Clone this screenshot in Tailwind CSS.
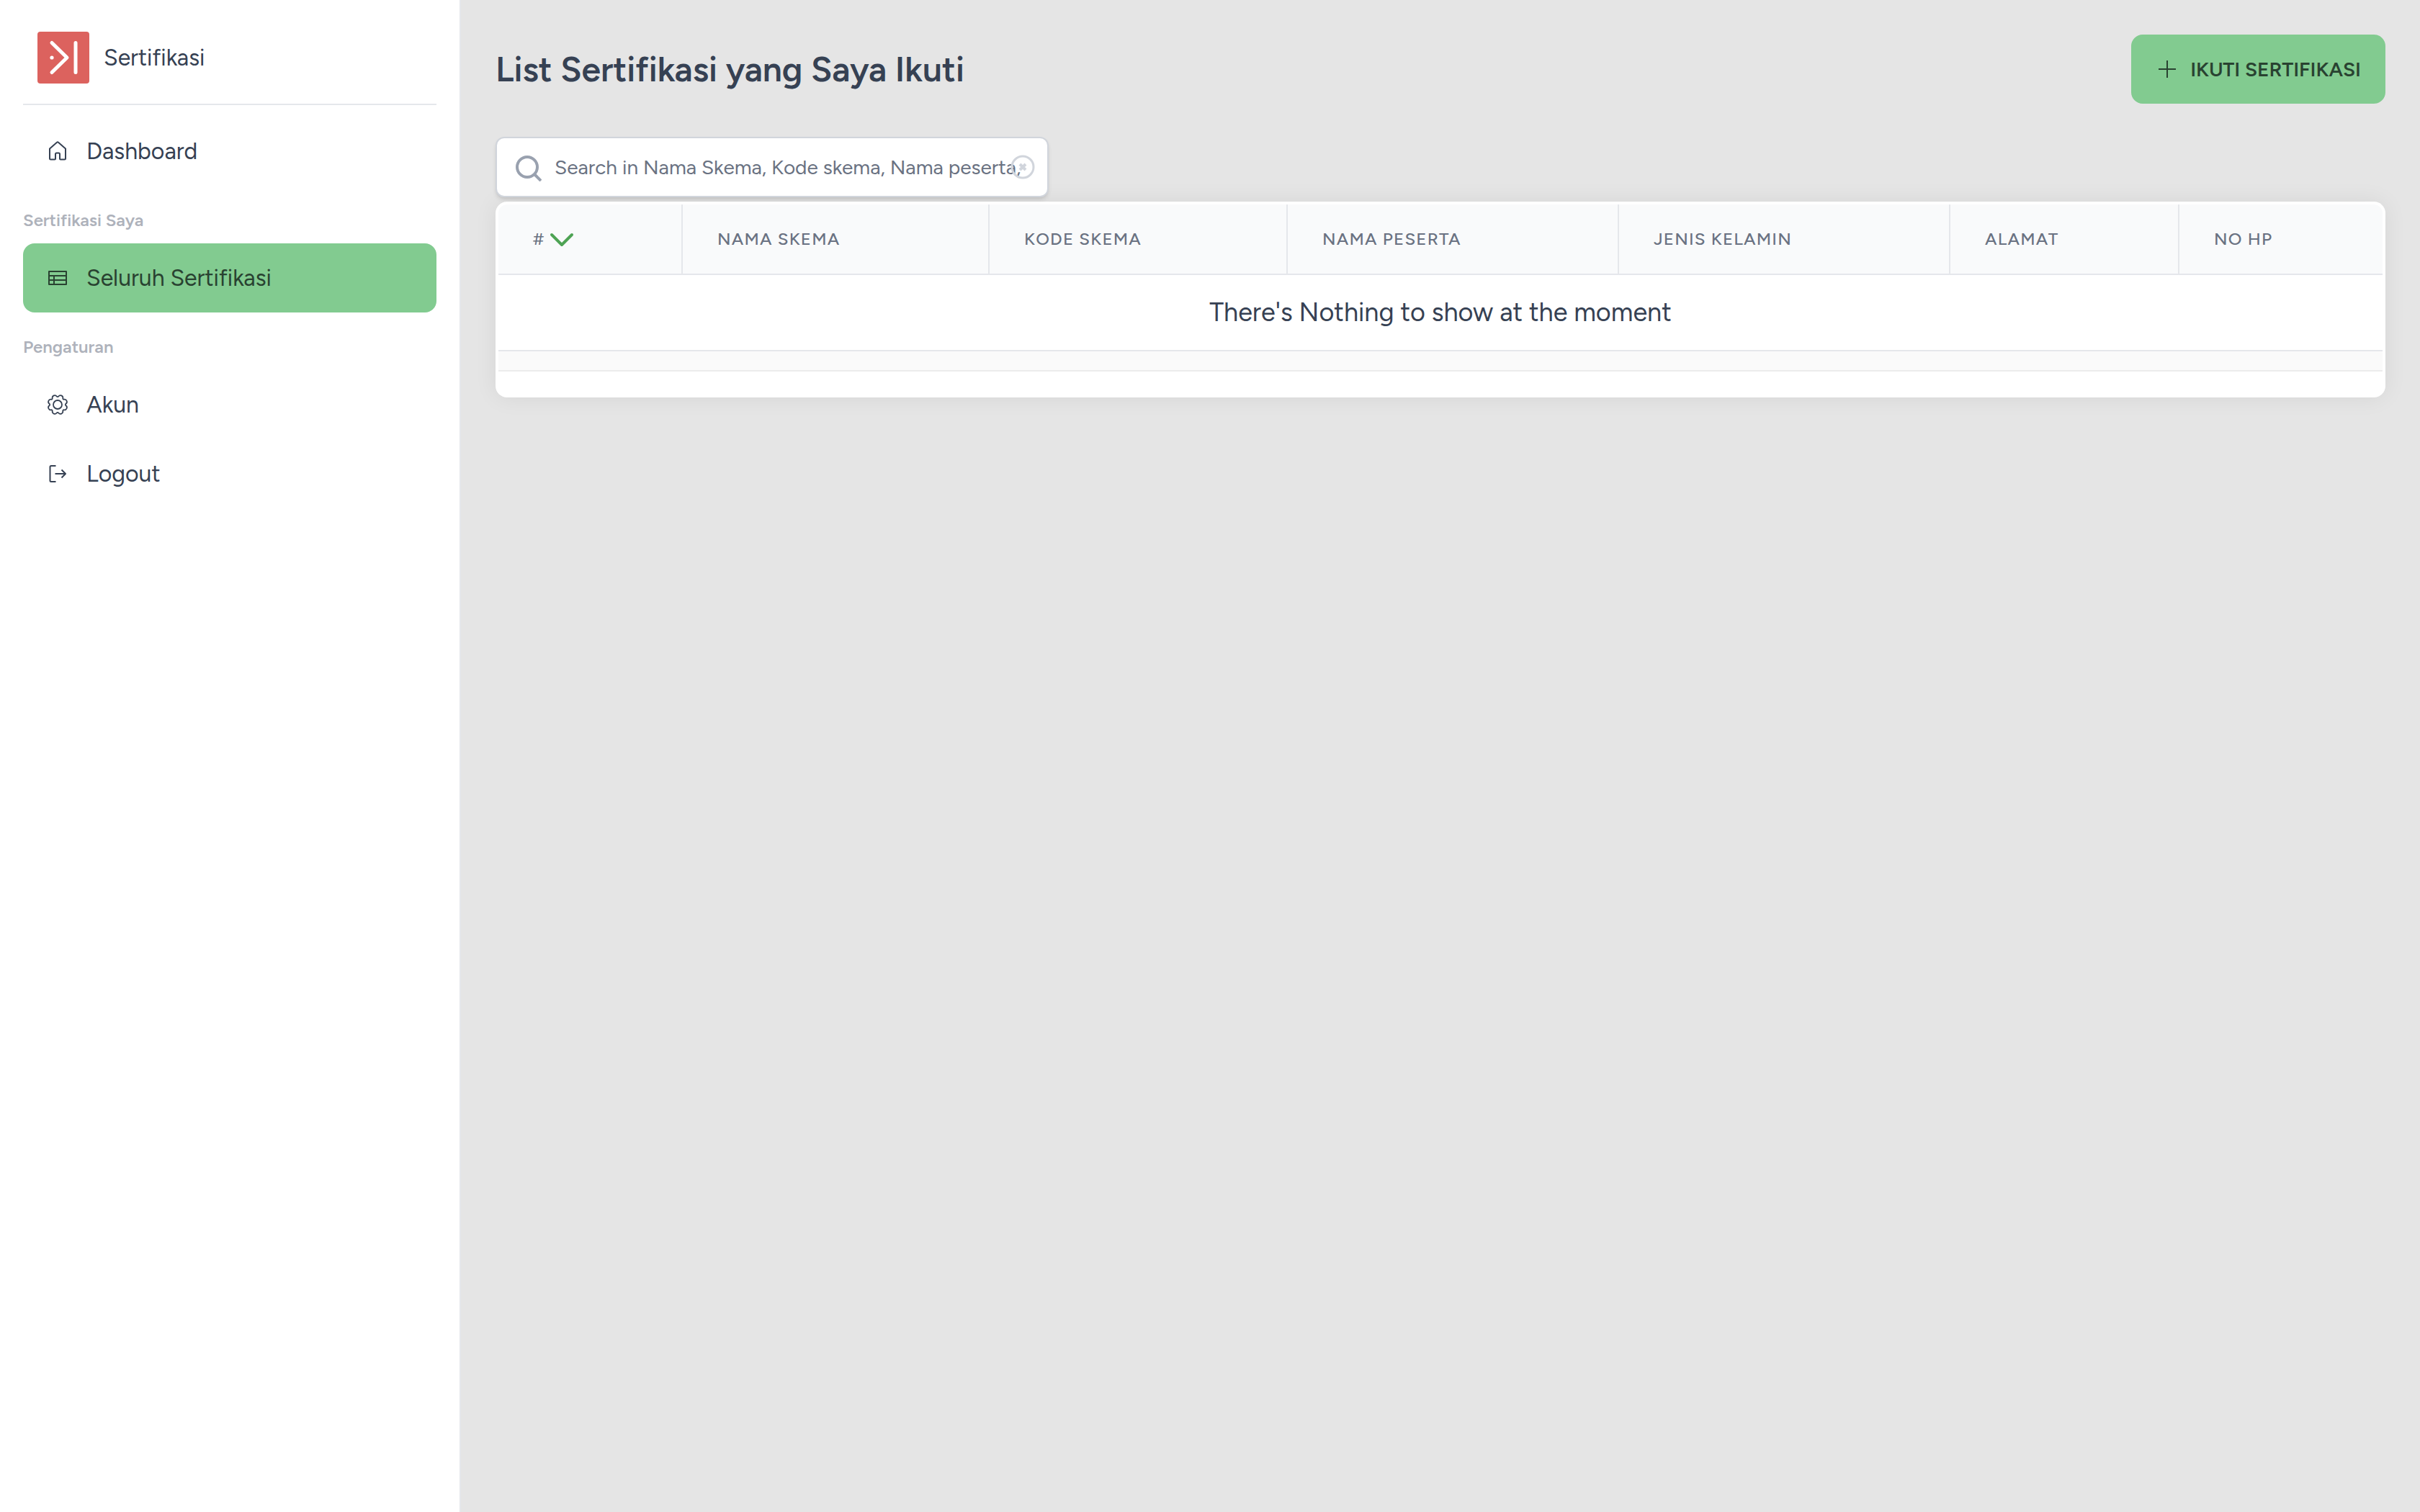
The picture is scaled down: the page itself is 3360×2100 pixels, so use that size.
<!DOCTYPE html>
<html lang="id">
<head>
<meta charset="utf-8">
<title>Sertifikasi</title>
<script src="https://cdn.jsdelivr.net/npm/@tailwindcss/browser@4"></script>
</head>
<body class="flex min-h-screen bg-[#e5e5e5] font-[Figtree,Roboto,sans-serif] text-[32px] leading-12 text-gray-700">
  <aside class="w-160 shrink-0 border-r-2 border-gray-200 bg-white px-8">
    <a href="#" class="flex h-[146px] items-center gap-5 border-b-2 border-gray-200 px-5 pt-4">
      <svg class="size-18 shrink-0" viewBox="0 0 72 72" fill="none" stroke="#fff" stroke-width="5" stroke-linecap="round" stroke-linejoin="round" aria-hidden="true">
        <rect width="72" height="72" rx="4" fill="#dc625e" stroke="none"/>
        <path d="M20 15.500 41 36 20 56.500M53 15.500v41"/>
        <circle cx="20" cy="36" r="2.600" fill="#fff" stroke="none"/>
      </svg>
      <span>Sertifikasi</span>
    </a>
    <nav class="pt-4">
      <a href="#" class="flex h-24 items-center gap-6 rounded-2xl px-8">
        <svg class="size-8 shrink-0" viewBox="0 0 32 32" fill="none" stroke="currentColor" stroke-width="2" stroke-linejoin="round" aria-hidden="true">
          <path d="M5 12.500 15 3.700q1-.800 2 0l10 8.800V26q0 1.500-1.500 1.500H20q-1 0-1-1V20q0-1.500-1.500-1.500h-3Q13 18.500 13 20v6.500q0 1-1 1H6.500Q5 27.500 5 26z"/>
        </svg>
        <span>Dashboard</span>
      </a>
      <h2 class="pt-8 pb-4 text-2xl leading-8 font-semibold text-[#aeb2bb]">Sertifikasi Saya</h2>
      <a href="#" aria-current="page" class="flex h-24 items-center gap-6 rounded-2xl bg-[#82cb90] px-8 text-[#294231]">
        <svg class="size-8 shrink-0" viewBox="0 0 32 32" fill="none" stroke="currentColor" stroke-width="2" stroke-linejoin="round" aria-hidden="true">
          <path d="M4 7h24v18H4zM4 13h24M4 19h24M11 13v12"/>
        </svg>
        <span>Seluruh Sertifikasi</span>
      </a>
      <h2 class="pt-8 pb-4 text-2xl leading-8 font-semibold text-[#aeb2bb]">Pengaturan</h2>
      <a href="#" class="flex h-24 items-center gap-6 rounded-2xl px-8">
        <svg class="size-8 shrink-0" viewBox="-1 -1 32 32" fill="none" stroke="currentColor" stroke-width="1.800" stroke-linejoin="round" aria-hidden="true">
          <path d="M16.200 3.500A3.400 3.400 0 0 1 22.300 6 1.400 1.400 0 0 0 24 7.700 3.400 3.400 0 0 1 26.500 13.800 1.400 1.400 0 0 0 26.500 16.200 3.400 3.400 0 0 1 24 22.300 1.400 1.400 0 0 0 22.300 24 3.400 3.400 0 0 1 16.200 26.500 1.400 1.400 0 0 0 13.800 26.500 3.400 3.400 0 0 1 7.700 24 1.400 1.400 0 0 0 6 22.300 3.400 3.400 0 0 1 3.500 16.200 1.400 1.400 0 0 0 3.500 13.800 3.400 3.400 0 0 1 6 7.700 1.400 1.400 0 0 0 7.700 6 3.400 3.400 0 0 1 13.800 3.500 1.400 1.400 0 0 0 16.200 3.500z"/>
          <circle cx="15" cy="15" r="6"/>
        </svg>
        <span>Akun</span>
      </a>
      <a href="#" class="flex h-24 items-center gap-6 rounded-2xl px-8">
        <svg class="size-8 shrink-0" viewBox="0 0 32 32" fill="none" stroke="currentColor" stroke-width="2" stroke-linejoin="round" aria-hidden="true">
          <path d="M13.500 5H7Q5.500 5 5.500 6.500v19q0 1.500 1.500 1.500h6.500M12.500 16H27M21.500 10.500 27 16l-5.500 5.500"/>
        </svg>
        <span>Logout</span>
      </a>
    </nav>
  </aside>

  <main class="min-w-0 flex-1 px-12 pt-12">
    <header class="flex items-center justify-between">
      <h1 class="text-5xl font-semibold">List Sertifikasi yang Saya Ikuti</h1>
      <button type="button" class="flex h-24 items-center gap-4 rounded-2xl border-2 border-[#82cb90] bg-[#82cb90] px-8 text-[28px] leading-10 font-semibold text-[#294231]">
        <svg class="size-8 shrink-0" viewBox="0 0 32 32" fill="none" stroke="currentColor" stroke-width="2" aria-hidden="true">
          <path d="M16 4v24M4 16h24"/>
        </svg>
        IKUTI SERTIFIKASI
      </button>
    </header>

    <div class="relative mt-[46px] w-192">
      <input type="text" aria-label="Search" placeholder="Search in Nama Skema, Kode skema, Nama peserta," class="block h-[84px] w-full rounded-xl border-2 border-gray-300 bg-white pr-6 pl-20 text-[28px] leading-10 shadow-md placeholder:text-gray-500">
      <svg class="pointer-events-none absolute top-[22px] left-6 size-10 text-gray-400" viewBox="0 0 40 40" fill="none" stroke="currentColor" stroke-width="4" aria-hidden="true">
        <circle cx="20" cy="20" r="14"/><path d="m30 30 9 9"/>
      </svg>
      <button type="button" aria-label="Clear search" class="absolute top-[22px] right-4 text-gray-300">
        <svg class="size-10" viewBox="0 0 40 40" fill="none" stroke="currentColor" stroke-width="3" aria-hidden="true">
          <circle cx="20" cy="20" r="15"/><path stroke-width="4" d="m16 16 8 8m0-8-8 8"/>
        </svg>
      </button>
    </div>

    <section class="mt-1.5 rounded-2xl bg-white px-1 pt-1 pb-9 shadow-[0_0_32px_rgba(0,0,0,0.07)]">
      <div class="overflow-hidden rounded-t-xl">
        <table class="w-full table-fixed border-separate border-spacing-0">
          <colgroup>
            <col class="w-64"><col class="w-[426px]"><col class="w-[414px]"><col class="w-[460px]"><col class="w-[460px]"><col class="w-[318px]"><col>
          </colgroup>
          <thead class="bg-gray-50 text-left text-2xl leading-8 tracking-wider text-gray-500 uppercase">
            <tr class="h-[98px]">
              <th scope="col" class="border-r-2 border-b-2 border-gray-200 px-12 font-medium">
                <button type="button" class="flex items-center gap-1.5 uppercase tracking-wider">#
                  <svg class="h-8 w-9" viewBox="0 0 36 32" fill="none" stroke="#4ea354" stroke-width="4" stroke-linecap="round" stroke-linejoin="round" aria-label="Sorted descending"><path d="m4 10 14 14 14-14"/></svg>
                </button>
              </th>
              <th scope="col" class="border-r-2 border-b-2 border-gray-200 px-12 font-medium">Nama Skema</th>
              <th scope="col" class="border-r-2 border-b-2 border-gray-200 px-12 font-medium">Kode skema</th>
              <th scope="col" class="border-r-2 border-b-2 border-gray-200 px-12 font-medium">Nama peserta</th>
              <th scope="col" class="border-r-2 border-b-2 border-gray-200 px-12 font-medium">Jenis kelamin</th>
              <th scope="col" class="border-r-2 border-b-2 border-gray-200 px-12 font-medium">Alamat</th>
              <th scope="col" class="border-b-2 border-gray-200 px-12 font-medium">No HP</th>
            </tr>
          </thead>
          <tbody>
            <tr class="h-[106px]">
              <td colspan="7" class="border-b-2 border-gray-200 text-center text-4xl">There's Nothing to show at the moment</td>
            </tr>
            <tr class="h-7 bg-neutral-50">
              <td colspan="7" class="border-b-2 border-[#ececec]"></td>
            </tr>
          </tbody>
        </table>
      </div>
    </section>
  </main>
</body>
</html>
